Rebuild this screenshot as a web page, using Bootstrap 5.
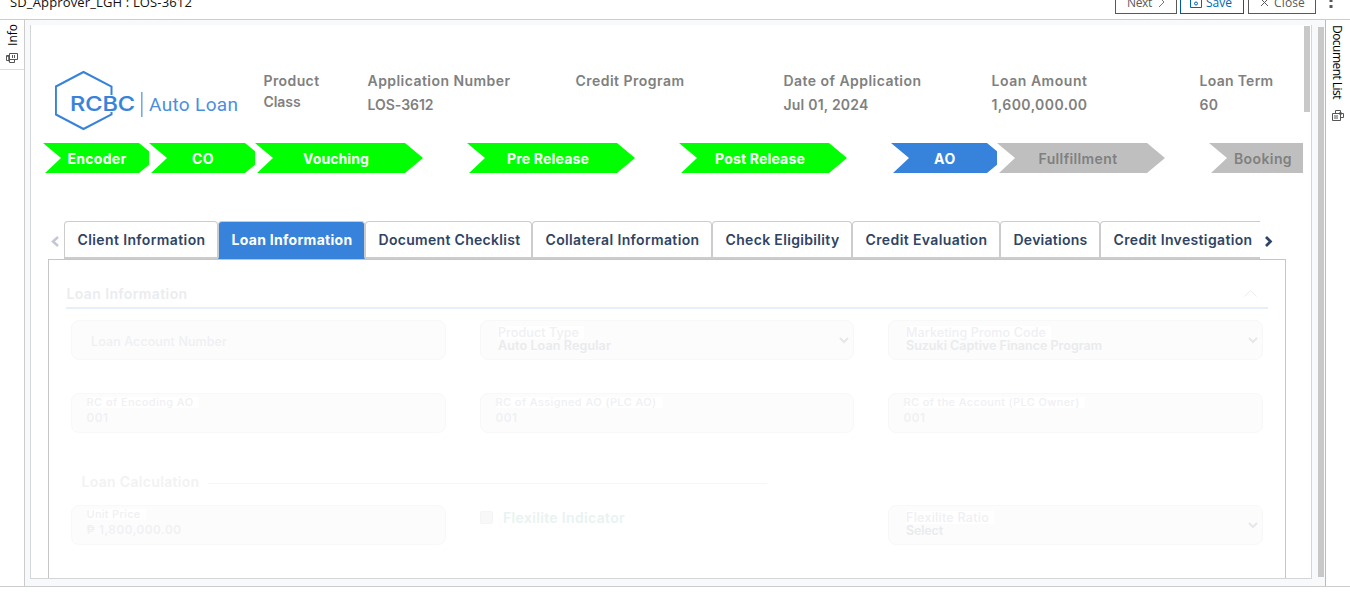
<!DOCTYPE html>
<html lang="en">
<head>
<meta charset="utf-8">
<title>SD_Approver_LGH : LOS-3612</title>
<link href="https://cdn.jsdelivr.net/npm/bootstrap@5.3.0/dist/css/bootstrap.min.css" rel="stylesheet">
<style>
body{font-family:Inter,"Liberation Sans",sans-serif;font-size:14px;font-weight:600;color:#808080;background:#fff;height:602px;overflow:hidden}
[data-w]{display:inline-block;white-space:nowrap}
.topbar{height:20px;border-bottom:1px solid #ccc;font-family:"Open Sans","Noto Sans",sans-serif;font-weight:400;font-size:13px;line-height:18px;padding:0 0 0 10px}
.topbar .title{color:#111;margin-top:-7px}
.actions{gap:3px;padding-right:15px}
.tool{height:24px;margin-top:-10px;border:1px solid #58595b;color:#58595b;font-size:12px;line-height:25px;border-radius:0;padding:0 11px}
.tool.primary{border-color:#005a9c;color:#0067b1;padding:0 9px;margin-right:1px}
.workspace{height:567px;border-bottom:1px solid #ccc}
.rail{width:25px;font-family:"Open Sans","Noto Sans",sans-serif;font-weight:400;font-size:12px;color:#000}
.rail-left{border-right:1px solid #ccc}
.rail-left .rail-tab{height:50px;border-bottom:1px solid #ddd;padding-top:4px}
.rail-right{border-left:1px solid #bbb;padding-top:5px}
.rail-text{writing-mode:vertical-rl;line-height:16px}
.rail-left .rail-text{transform:rotate(180deg);margin-left:2px}
.rail-right .rail-text{margin-right:2px}
.stage{background:#f8f9fb;padding:5px 0 7px 5px}
.sheet{width:1282px;background:#fff;border:1px solid #d3d5d8;border-top:0;height:554px;overflow:hidden}
.sheet-body{width:1272px;overflow:hidden}
.thumb{background:#c8c8c8}
.thumb-in{width:6px;height:86px;margin:1px 0 0 1px}
.thumb-out{width:6px;height:550px;margin:2px 0 0 6px}
.summary{padding-left:16px;width:1264px;height:118px;line-height:21px}
.summary>div{padding:45px 0 0 8.5px;flex:none}
.summary>.brand{padding-left:7.5px}
.c1{width:104px}.c2{width:208px}
.summary .val{margin-top:3px}
.steps{height:30px;padding-left:12px}
.cell{flex:none;overflow:hidden;width:106px}
.cell.wide{width:212px}
.step{height:30px;line-height:32px;width:114px;padding:0 6px 0 0;clip-path:polygon(0 0,96px 0,100% 50%,96px 100%,2px 100%,18px 50%);background:#0f0;color:#fff;text-align:center;font-weight:700}
.wide .step{width:168px;clip-path:polygon(0 0,150px 0,100% 50%,150px 100%,2px 100%,18px 50%)}
.step.now{background:#3783db}
.step.todo{background:#bfbfbf;color:#808080;font-weight:600}
.tabstrip{margin-top:48px;height:38px;padding-left:17px}
.tabstrip>svg{flex:none}
.tabs{width:1196px;overflow:hidden;height:38px}
.tab{flex:none;height:38px;border:1px solid #ccc;border-bottom-width:2px;border-radius:4px 4px 0 0;line-height:36px;color:#2e4464;padding-left:12.5px}
.tab.on{background:#3783db;color:#fff;border-bottom-color:#3783db;font-weight:700}
.panel{width:1238px;margin-left:17px;border:1px solid #c6c6c6;height:340px;padding:0 17px;color:#eff0f3}
.sec{height:49px;border-bottom:2px solid #e6effa;padding:24px 10px 0 .5px;line-height:20px;color:#ebecf0}
.fields{display:grid;grid-template-columns:375px 374px 375px;column-gap:34px;padding:0 5px}
.r1{margin-top:11px}.r2{margin-top:33px}.r3{margin-top:12px}
.fld{height:40px;border:1px solid #f8f8f9;border-radius:8px;background:#fcfcfc;padding:3px 14.5px;font-size:12px;line-height:17px;font-weight:500}
.fld .lab{font-size:11px;line-height:11px;height:11px;background:#fff;padding-right:5px;width:max-content}
.fld .v{line-height:18px;margin-top:1px}
.fld.sel{padding:5px 4px 0 17px;font-size:12.5px}
.fld.sel .lab{font-size:12.5px;line-height:13px;height:13px}
.fld.sel .v{line-height:13px;margin-top:0;color:#e9ebee;font-weight:600}
.fld.sel svg{margin-top:8px}
.calc{margin-top:37px;height:23px;padding-left:15.5px;color:#f2f2f3}
.calc i{width:559px;height:1px;background:#f6f6f6;margin:4px 0 0 8px}
.tick{width:13px;height:13px;background:#f8f8f8;border-radius:2px;border:1px solid #f5f5f5}
.flexi{color:#e8f3f1;height:25px}
</style>
</head>
<body>
<header class="topbar d-flex justify-content-between">
  <div class="title"><span data-w="182">SD_Approver_LGH : LOS-3612</span></div>
  <div class="actions d-flex">
    <div class="tool d-flex align-items-center" style="width:62px"><span data-w="25">Next</span><svg class="flex-shrink-0" style="margin-left:6px" width="7" height="12" viewBox="0 0 7 12" fill="none" stroke="#777"><path d="M1 1l5 5-5 5"/></svg></div>
    <div class="tool primary d-flex align-items-center" style="width:64px"><svg class="flex-shrink-0" width="12" height="12" viewBox="0 0 12 12" fill="none" stroke="#0067b1"><path d="M.5.5h11v11H.5zM3 .5v3h6v-3"/><circle cx="6" cy="7.5" r="1.5"/></svg><span class="ms-1" data-w="26">Save</span></div>
    <div class="tool d-flex align-items-center" style="width:68px"><svg class="flex-shrink-0" width="9" height="9" viewBox="0 0 9 9" stroke="#58595b"><path d="M1 1l7 7M8 1L1 8"/></svg><span data-w="31" style="margin-left:5px">Close</span></div>
    <svg width="8" height="12" class="ms-2" viewBox="0 0 8 12" fill="#58595b"><rect x="2.5" y="0" width="3" height="2"/><rect x="2.5" y="5" width="3" height="3"/></svg>
  </div>
</header>
<main class="workspace d-flex">
  <aside class="rail rail-left flex-shrink-0">
    <div class="rail-tab d-flex flex-column align-items-center"><span class="rail-text">Info</span>
      <svg style="margin-top:7px" width="12" height="11" viewBox="0 0 12 11" fill="none" stroke="#555"><path d="M3.5.5h8v6h-8zM3 2.500H.5v5H3M3.500 7v2.500h5V7M6.500 2v3M8.500 2v3"/><path d="M1 3h2v4l1-1" stroke-width="1.500"/></svg></div>
  </aside>
  <section class="stage d-flex flex-grow-1">
    <div class="sheet d-flex">
      <div class="sheet-body">
        <div class="summary d-flex">
          <div class="c2 brand"><svg width="190" height="62" viewBox="0 0 190 62"><path d="M56.500 25V16.500L28.500 2 .9 16.500v28L28.500 59l28-14.500V42" fill="none" stroke="#3783db" stroke-width="2"/><path d="M86.800 22v25" stroke="#6fa5e5" stroke-width="1.500"/><text x="15" y="41" font-family="Inter,sans-serif" font-size="20" font-weight="500" fill="#3783db" stroke="#3783db" stroke-width=".2" textLength="65" lengthAdjust="spacingAndGlyphs">RCBC</text><text x="94" y="41" font-family="Roboto,sans-serif" font-size="19" font-weight="400" fill="#4a8fdf" textLength="89">Auto Loan</text></svg></div>
          <div class="c1"><span data-w="56">Product</span><br><span data-w="37">Class</span></div>
          <div class="c2"><span data-w="143">Application Number</span><div class="val"><span data-w="66">LOS-3612</span></div></div>
          <div class="c2"><span data-w="109">Credit Program</span></div>
          <div class="c2"><span data-w="138">Date of Application</span><div class="val"><span data-w="85">Jul 01, 2024</span></div></div>
          <div class="c2"><span data-w="96">Loan Amount</span><div class="val"><span data-w="96">1,600,000.00</span></div></div>
          <div class="c1"><span data-w="74">Loan Term</span><div class="val"><span data-w="19">60</span></div></div>
        </div>
        <div class="steps d-flex">
          <div class="cell"><div class="step"><span data-w="59">Encoder</span></div></div>
          <div class="cell"><div class="step"><span data-w="22">CO</span></div></div>
          <div class="cell wide"><div class="step"><span data-w="66">Vouching</span></div></div>
          <div class="cell wide"><div class="step"><span data-w="82">Pre Release</span></div></div>
          <div class="cell wide"><div class="step"><span data-w="90">Post Release</span></div></div>
          <div class="cell"><div class="step now"><span data-w="22">AO</span></div></div>
          <div class="cell wide"><div class="step todo"><span data-w="79">Fullfillment</span></div></div>
          <div class="cell"><div class="step todo"><span data-w="58">Booking</span></div></div>
        </div>
        <nav class="tabstrip d-flex">
          <svg width="16" height="38" viewBox="0 0 16 38" fill="none" stroke="#c3c8d6" stroke-width="2.500"><path d="M10 16l-5 4.500 5 4.500"/></svg>
          <div class="tabs d-flex">
            <div class="tab" style="width:154px"><span data-w="128">Client Information</span></div>
            <div class="tab on" style="width:147px"><span data-w="121">Loan Information</span></div>
            <div class="tab" style="width:167px"><span data-w="142">Document Checklist</span></div>
            <div class="tab" style="width:180px"><span data-w="154">Collateral Information</span></div>
            <div class="tab" style="width:140px"><span data-w="114">Check Eligibility</span></div>
            <div class="tab" style="width:148px"><span data-w="122">Credit Evaluation</span></div>
            <div class="tab" style="width:100px"><span data-w="74">Deviations</span></div>
            <div class="tab" style="width:170px"><span data-w="139">Credit Investigation</span></div>
          </div>
          <svg width="16" height="38" viewBox="0 0 16 38" fill="none" stroke="#2e4464" stroke-width="2.700"><path d="M6 16l4.500 4.500L6 25"/></svg>
        </nav>
        <div class="panel">
          <div class="sec d-flex justify-content-between"><span data-w="121">Loan Information</span><svg class="mt-1" width="16" height="12" viewBox="0 0 16 12" fill="none" stroke="#ebebee"><path d="M2.500 8.500L8.500 2.500l6 6"/></svg></div>
          <div class="fields r1">
            <div class="fld" style="padding:12px 19px"><span data-w="136" style="font-size:12.500px">Loan Account Number</span></div>
            <div class="fld sel d-flex justify-content-between"><div><div class="lab"><span data-w="81">Product Type</span></div><div class="v"><span data-w="113">Auto Loan Regular</span></div></div><svg width="10" height="12" viewBox="0 0 10 12" fill="none" stroke="#e6e7ea" stroke-width="2"><path d="M1 4l4 4 4-4"/></svg></div>
            <div class="fld sel d-flex justify-content-between"><div><div class="lab"><span data-w="140">Marketing Promo Code</span></div><div class="v"><span data-w="196">Suzuki Captive Finance Program</span></div></div><svg width="10" height="12" viewBox="0 0 10 12" fill="none" stroke="#e6e7ea" stroke-width="2"><path d="M1 4l4 4 4-4"/></svg></div>
          </div>
          <div class="fields r2">
            <div class="fld"><div class="lab"><span data-w="107">RC of Encoding AO</span></div><div class="v"><span data-w="22">001</span></div></div>
            <div class="fld"><div class="lab"><span data-w="161">RC of Assigned AO (PLC AO)</span></div><div class="v"><span data-w="22">001</span></div></div>
            <div class="fld"><div class="lab"><span data-w="176">RC of the Account (PLC Owner)</span></div><div class="v"><span data-w="22">001</span></div></div>
          </div>
          <div class="calc d-flex align-items-center"><span data-w="118">Loan Calculation</span><i></i></div>
          <div class="fields r3">
            <div class="fld"><div class="lab"><span data-w="54">Unit Price</span></div><div class="v"><span data-w="95">₱ 1,800,000.00</span></div></div>
            <div class="flexi d-flex align-items-center"><div class="tick"></div><span data-w="122" style="margin-left:10px">Flexilite Indicator</span></div>
            <div class="fld sel d-flex justify-content-between"><div><div class="lab"><span data-w="83">Flexilite Ratio</span></div><div class="v"><span data-w="37">Select</span></div></div><svg width="10" height="12" viewBox="0 0 10 12" fill="none" stroke="#e6e7ea" stroke-width="2"><path d="M1 4l4 4 4-4"/></svg></div>
          </div>
        </div>
      </div>
      <div class="thumb thumb-in"></div>
    </div>
    <div class="thumb thumb-out"></div>
  </section>
  <aside class="rail rail-right flex-shrink-0 d-flex flex-column align-items-center"><span class="rail-text"><span data-h="74">Document List</span></span>
    <svg style="margin-top:11px" width="12" height="11" viewBox="0 0 12 11" fill="none" stroke="#555"><path d="M.5 3.500h8v7h-8zM3 5v4M5 5v4M3.500 3V.5h5V3M8.500 3.500h3v4h-3"/><path d="M7 3.500h3" stroke-width="2"/></svg></aside>
</main>
<script src="https://cdn.jsdelivr.net/npm/bootstrap@5.3.0/dist/js/bootstrap.bundle.min.js"></script>
<script>
// Track each label's letters so that it fills its design width.
function track(el, want, have){
  el.style.letterSpacing = ((want - have) / el.textContent.length) + 'px';
}
document.querySelectorAll('[data-w]').forEach(el => track(el, +el.dataset.w, el.getBoundingClientRect().width));
document.querySelectorAll('[data-h]').forEach(el => track(el, +el.dataset.h, el.getBoundingClientRect().height));
</script>
</body>
</html>
